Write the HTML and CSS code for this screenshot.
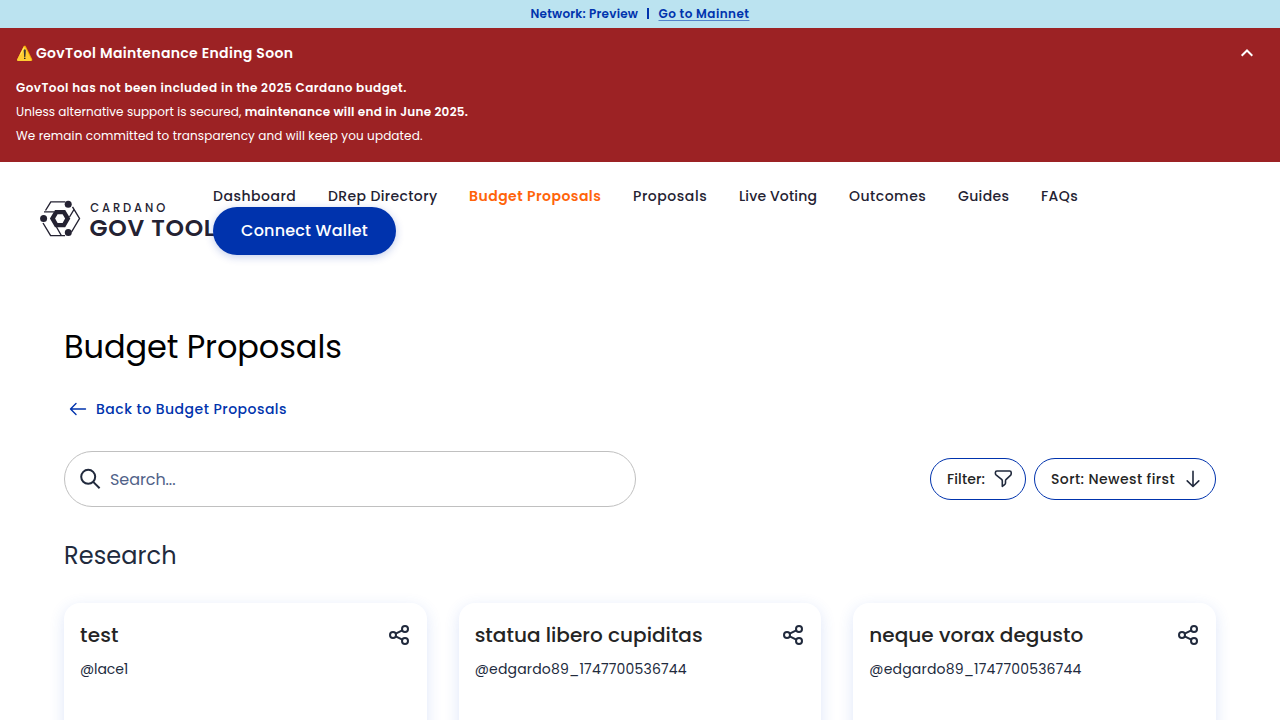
FILE: index.html
```html
<!DOCTYPE html>
<html lang="en">
<head>
<meta charset="utf-8">
<title>Budget Proposals</title>
<link rel="stylesheet" href="styles.css">
</head>
<body>
<svg class="defs" width="0" height="0">
  <symbol id="share" viewBox="0 0 24 24"><g fill="none" stroke="#212a3d" stroke-width="2"><circle cx="6" cy="12" r="3"/><circle cx="18" cy="6" r="3"/><circle cx="18" cy="18" r="3"/><path d="M8.7 10.7 15.3 7.4M8.7 13.3l6.6 3.3"/></g></symbol>
</svg>
<div class="network"><span class="net-name">Network: Preview</span><span class="bar"></span><a class="net-link">Go to Mainnet</a></div>
<section class="alert">
  <div class="alert-head"><h2 class="alert-title"><span class="emoji">⚠️</span><span class="alert-label">GovTool Maintenance Ending Soon</span></h2>
    <svg class="chevron" width="24" height="24" viewBox="0 0 24 24"><path d="m6.7 14.7 5.3-5.2 5.3 5.2" fill="none" stroke="#fff" stroke-width="2"/></svg>
  </div>
  <p class="alert-line"><b class="a1">GovTool has not been included in the 2025 Cardano budget.</b></p>
  <p class="alert-line"><span class="a2">Unless alternative support is secured, </span><b class="a3">maintenance will end in June 2025.</b></p>
  <p class="alert-line"><span class="a4">We remain committed to transparency and will keep you updated.</span></p>
</section>
<header class="header">
  <svg class="logo" width="173" height="36" viewBox="0 0 173 36">
    <g fill="none" stroke="#242232" stroke-width="1.4">
      <path d="M5.5 9.5 10.8.9h14.5M4 10.900h10M32.500 5.800l7 11.700-8 13.500M34 8.500 29.500 16M3 22l7.600 12.600H25M16.500 26l4.800 8.500"/>
    </g>
    <g fill="#242232"><circle cx="3.6" cy="17.5" r="3.5"/><circle cx="28.2" cy="3.3" r="3.5"/><circle cx="28.3" cy="31.6" r="3.5"/>
      <path fill-rule="evenodd" d="M15 8.900h10.200l5.100 8.700-5.100 8.700H15l-5.100-8.700zM17.600 13.200l-2.500 4.400 2.500 4.400h5l2.500-4.400-2.500-4.400z"/></g>
    <text class="logo-small" x="50.2" y="11.2" textLength="75" lengthAdjust="spacing">CARDANO</text>
    <text class="logo-big" x="49.600" y="35" textLength="125" lengthAdjust="spacing">GOV TOOL</text>
  </svg>
  <div class="header-main">
    <nav class="nav">
      <a class="n1">Dashboard</a><a class="n2">DRep Directory</a><a class="n3 active">Budget Proposals</a><a class="n4">Proposals</a><a class="n5">Live Voting</a><a class="n6">Outcomes</a><a class="n7">Guides</a><a class="n8">FAQs</a>
    </nav>
    <button class="connect">Connect Wallet</button>
  </div>
</header>
<main class="main">
  <h1 class="title">Budget Proposals</h1>
  <a class="back"><svg width="20" height="20" viewBox="0 0 20 20"><path d="M17.500 10H2.800M8 4.500 2.500 10 8 15.500" fill="none" stroke="#0033ad" stroke-width="1.4" stroke-linecap="round" stroke-linejoin="round"/></svg><span class="back-label">Back to Budget Proposals</span></a>
  <div class="toolbar">
    <div class="search"><svg width="24" height="24" viewBox="0 0 24 24"><circle cx="10.200" cy="9.800" r="7" fill="none" stroke="#212a3d" stroke-width="2"/><path d="m15.200 14.900 6.400 6.400" stroke="#212a3d" stroke-width="2"/></svg><span class="placeholder">Search...</span></div>
    <div class="actions">
      <button class="pill filter"><span class="f-label">Filter:</span><svg width="20" height="20" viewBox="0 0 20 20"><path d="M4 2h12.600c1 0 1.600.7 1.600 1.600v1.100c0 .8-.4 1.500-1 2l-4 3.600c-.5.5-.7 1-.7 1.600v2.200c0 .6-.4 1.200-.9 1.500L9.300 17.300V12c0-.7-.3-1.200-.7-1.700L3.300 6.100c-.6-.5-.9-1-.9-1.700v-.8C2.400 2.700 3 2 4 2z" fill="none" stroke="#212a3d" stroke-width="1.6" stroke-linejoin="round"/></svg></button>
      <button class="pill sort"><span class="s-label">Sort: Newest first</span><svg width="20" height="20" viewBox="0 0 20 20"><path d="M10 2.300v15M4.200 11.900l5.800 5.600 5.800-5.600" fill="none" stroke="#212a3d" stroke-width="1.6" stroke-linecap="round" stroke-linejoin="round"/></svg></button>
    </div>
  </div>
  <h2 class="section">Research</h2>
  <div class="cards">
    <article class="card"><div class="card-head"><h3 class="c1">test</h3><svg width="24" height="24"><use href="#share"/></svg></div><p class="u1">@lace1</p></article>
    <article class="card"><div class="card-head"><h3 class="c2">statua libero cupiditas</h3><svg width="24" height="24"><use href="#share"/></svg></div><p class="u2">@edgardo89_1747700536744</p></article>
    <article class="card"><div class="card-head"><h3 class="c3">neque vorax degusto</h3><svg width="24" height="24"><use href="#share"/></svg></div><p class="u2">@edgardo89_1747700536744</p></article>
  </div>
</main>
</body>
</html>
```
FILE: styles.css
```css
* { box-sizing: border-box; }
body { margin: 0; height: 720px; overflow: hidden; background: #fff; color: #212a3d; font-family: Poppins, Inter, sans-serif; }
h1, h2, h3, p { margin: 0; font-weight: 400; }
a, span, b, h1, h2, h3, p, button { white-space: nowrap; }
button { font-family: inherit; padding: 0; }
svg { flex: none; }
.defs { position: absolute; }
.network { height: 28px; display: flex; align-items: center; justify-content: center; background: #bbe3f0; color: #0033ad; font-size: 12px; font-weight: 600; }
.net-name { width: 108px; letter-spacing: .22px; }
.bar { width: 2px; height: 11px; margin: 0 10px 2px 8px; background: #0033ad; }
.net-link { width: 91px; letter-spacing: .45px; text-decoration: underline; text-decoration-thickness: 1px; text-underline-offset: 2px; text-decoration-color: rgba(0, 51, 173, .55); }
.alert { height: 134px; padding: 12px 16px 0; background: #9c2224; color: #fff; font-size: 12px; }
.alert-head { display: flex; justify-content: space-between; align-items: center; height: 26px; margin-bottom: 10px; padding-right: 5px; }
.alert-title { display: flex; align-items: center; gap: 3px; font-size: 14px; font-weight: 600; }
.emoji { width: 17px; }
.alert-label { letter-spacing: .34px; }
.alert-line { line-height: 24px; }
.alert-line b { font-weight: 600; }
.a1 { letter-spacing: .46px; }
.a2 { letter-spacing: .06px; }
.a3 { letter-spacing: .27px; }
.a4 { letter-spacing: .12px; }
.header { height: 104px; display: flex; padding: 24px 40px 0; }
.logo { margin-top: 15px; overflow: visible; fill: #242232; }
.logo-small { font-size: 11.5px; font-weight: 500; }
.logo-big { font-size: 23.5px; font-weight: 600; }
.nav { display: flex; gap: 32px; height: 21px; align-items: center; font-size: 14px; font-weight: 500; color: #242232; }
.nav .active { color: #ff640a; font-weight: 600; }
.n1 { width: 83px; letter-spacing: .5px; }
.n2 { width: 109px; letter-spacing: .37px; }
.n3 { width: 132px; letter-spacing: .47px; }
.n4 { width: 74px; letter-spacing: .55px; }
.n5 { width: 78px; letter-spacing: .15px; }
.n6 { width: 77px; letter-spacing: .5px; }
.n7 { width: 51px; letter-spacing: .35px; }
.n8 { width: 37px; letter-spacing: .4px; }
.connect { width: 183px; height: 48px; border: 0; padding-bottom: 2px; border-radius: 24px; background: #0033ad; color: #fff; font-size: 16px; font-weight: 500; letter-spacing: .2px; box-shadow: 0 2px 9px rgba(0, 51, 173, .24); position: relative; }
.main { padding: 56px 64px 0; }
.title { height: 50px; line-height: 50px; font-size: 32px; letter-spacing: -.1px; color: #000; }
.back { display: flex; align-items: center; gap: 8px; height: 24px; margin-top: 25px; padding-left: 4px; color: #0033ad; font-size: 14px; font-weight: 500; letter-spacing: .48px; }
.toolbar { display: flex; justify-content: space-between; align-items: center; margin-top: 30px; }
.search { width: 572px; height: 56px; border: 1px solid #c0c0c0; border-radius: 28px; display: flex; align-items: center; gap: 8px; padding-left: 13px; font-size: 16px; letter-spacing: -.08px; color: #506288; }
.actions { display: flex; gap: 8px; }
.pill { height: 42px; display: flex; align-items: center; justify-content: space-between; border: 1px solid #0033ad; border-radius: 21px; background: #fff; color: #242424; font-size: 14px; font-weight: 500; padding: 0 12px 0 16px; }
.filter { width: 96px; letter-spacing: .1px; }
.sort { width: 182px; letter-spacing: .41px; }
.section { height: 32px; line-height: 32px; margin-top: 33px; font-size: 24px; letter-spacing: .08px; }
.cards { display: grid; grid-template-columns: repeat(3, 1fr); gap: 32px; margin-top: 31px; }
.card { height: 240px; border-radius: 16px; background: #fff; padding: 16px; box-shadow: 0 4px 15px rgba(47, 98, 220, .16); }
.card-head { display: flex; justify-content: space-between; align-items: center; height: 32px; color: #242424; }
.card h3 { font-size: 20px; font-weight: 500; letter-spacing: .03px; }
.card .c1 { letter-spacing: .2px; }
.card p { margin-top: 8px; line-height: 20px; font-size: 14px; }
.u1 { letter-spacing: -.1px; }
.u2 { letter-spacing: .18px; }
```
